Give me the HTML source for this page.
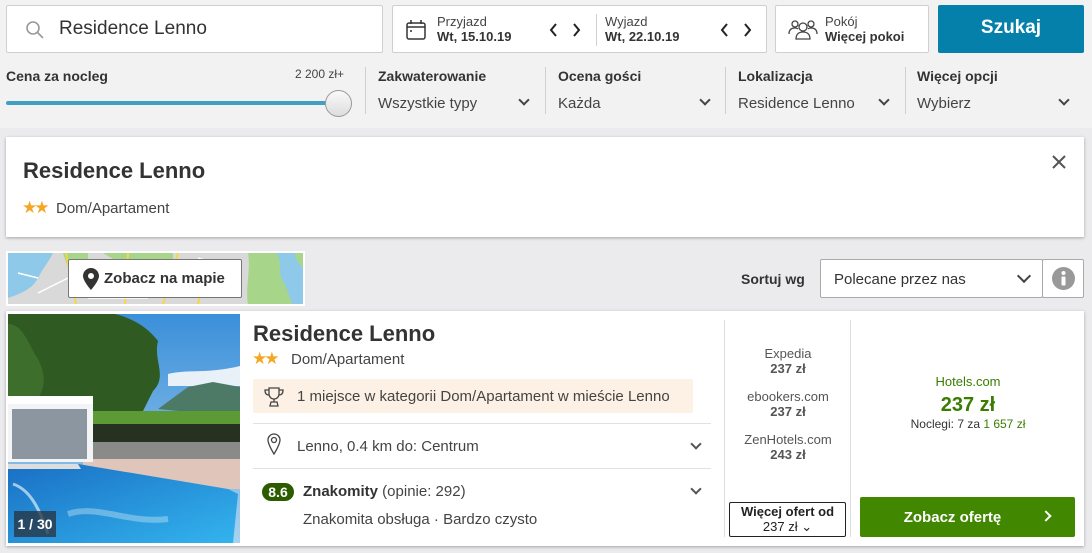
<!DOCTYPE html>
<html><head><meta charset="utf-8">
<style>
*{box-sizing:border-box;margin:0;padding:0}
body{width:1092px;height:553px;background:#ebebed;font-family:"Liberation Sans",Arial,sans-serif;color:#333;position:relative;overflow:hidden}
.a{position:absolute}
.box{position:absolute;background:#fff;border:1px solid #cfcfcf;border-radius:2px}
.lbl{font-size:14px;font-weight:bold;color:#333}
.val{font-size:15px;color:#444}
.div{position:absolute;width:1px;background:#d0d0d0}
.chev{position:absolute;width:8px;height:8px;border-right:2px solid #444;border-bottom:2px solid #444;transform:rotate(45deg)}
.card{position:absolute;background:#fff;box-shadow:0 1px 3px rgba(0,0,0,.3)}
.gray{color:#555}
</style></head><body>
<div class="a" style="left:0;top:0;width:1092px;height:128px;background:#f2f2f2"></div>
<!-- search -->
<div class="box" style="left:6px;top:5px;width:377px;height:48px">
<svg class="a" style="left:18px;top:14px" width="20" height="20" viewBox="0 0 20 20"><circle cx="8" cy="8" r="6" fill="none" stroke="#999" stroke-width="1.6"/><line x1="12.5" y1="12.5" x2="18" y2="18" stroke="#999" stroke-width="1.6"/></svg>
<div class="a" style="left:52px;top:12px;font-size:19px;color:#333">Residence Lenno</div></div>
<!-- dates -->
<div class="box" style="left:392px;top:5px;width:375px;height:48px">
<svg class="a" style="left:12px;top:13px" width="22" height="22" viewBox="0 0 22 22"><rect x="2" y="4" width="18" height="16" rx="2" fill="none" stroke="#333" stroke-width="1.5"/><line x1="2" y1="8" x2="20" y2="8" stroke="#333" stroke-width="1.5"/><line x1="6" y1="1" x2="6" y2="5" stroke="#333" stroke-width="1.5"/><line x1="16" y1="1" x2="16" y2="5" stroke="#333" stroke-width="1.5"/><circle cx="6" cy="12" r="1" fill="#333"/></svg>
<div class="a" style="left:44px;top:8px;font-size:13px;color:#444">Przyjazd</div>
<div class="a" style="left:44px;top:23px;font-size:13px;font-weight:bold">Wt, 15.10.19</div>
<svg class="a" style="left:156px;top:16px" width="32" height="16" viewBox="0 0 32 16" fill="none" stroke="#222" stroke-width="2"><path d="M7 2L2 8l5 6M25 2l5 6-5 6"/></svg>
<div class="div" style="left:203px;top:8px;height:32px"></div>
<div class="a" style="left:212px;top:8px;font-size:13px;color:#444">Wyjazd</div>
<div class="a" style="left:212px;top:23px;font-size:13px;font-weight:bold">Wt, 22.10.19</div>
<svg class="a" style="left:327px;top:16px" width="32" height="16" viewBox="0 0 32 16" fill="none" stroke="#222" stroke-width="2"><path d="M7 2L2 8l5 6M25 2l5 6-5 6"/></svg>
</div>
<!-- room -->
<div class="box" style="left:775px;top:5px;width:154px;height:48px">
<svg class="a" style="left:12px;top:12px" width="30" height="24" viewBox="0 0 30 24" fill="none" stroke="#444" stroke-width="1.3"><circle cx="15" cy="9" r="4"/><path d="M8 21c0-5 3-7 7-7s7 2 7 7z"/><circle cx="7" cy="6" r="3"/><path d="M1 16c0-4 2-6 6-6 1 0 2 .3 3 .8"/><circle cx="23" cy="6" r="3"/><path d="M29 16c0-4-2-6-6-6-1 0-2 .3-3 .8"/></svg>
<div class="a" style="left:49px;top:8px;font-size:13px;color:#444">Pokój</div>
<div class="a" style="left:49px;top:23px;font-size:13px;font-weight:bold">Więcej pokoi</div></div>
<div class="a" style="left:938px;top:5px;width:146px;height:48px;background:#0580ab;border-radius:2px;color:#fff;font-size:19px;font-weight:bold;text-align:center;line-height:46px">Szukaj</div>
<!-- filters -->
<div class="a lbl" style="left:6px;top:68px">Cena za nocleg</div>
<div class="a" style="left:295px;top:67px;font-size:12px;color:#444">2 200 zł+</div>
<div class="a" style="left:6px;top:101px;width:330px;height:4px;background:#3fa0c2;border-radius:2px"></div>
<div class="a" style="left:325px;top:90px;width:27px;height:27px;border-radius:50%;background:linear-gradient(#fafafa,#ddd);border:1px solid #999"></div>
<div class="div" style="left:365px;top:67px;height:47px"></div>
<div class="a lbl" style="left:378px;top:68px">Zakwaterowanie</div><div class="a val" style="left:378px;top:95px">Wszystkie typy</div><div class="chev" style="left:520px;top:96px"></div>
<div class="div" style="left:545px;top:67px;height:47px"></div>
<div class="a lbl" style="left:558px;top:68px">Ocena gości</div><div class="a val" style="left:558px;top:95px">Każda</div><div class="chev" style="left:701px;top:96px"></div>
<div class="div" style="left:725px;top:67px;height:47px"></div>
<div class="a lbl" style="left:738px;top:68px">Lokalizacja</div><div class="a val" style="left:738px;top:95px">Residence Lenno</div><div class="chev" style="left:880px;top:96px"></div>
<div class="div" style="left:905px;top:67px;height:47px"></div>
<div class="a lbl" style="left:917px;top:68px">Więcej opcji</div><div class="a val" style="left:917px;top:95px">Wybierz</div><div class="chev" style="left:1060px;top:96px"></div>
<!-- card 1 -->
<div class="card" style="left:6px;top:137px;width:1078px;height:100px">
<div class="a" style="left:17px;top:21px;font-size:22px;font-weight:bold;color:#333">Residence Lenno</div>
<div class="a" style="left:16px;top:61px;font-size:17px;color:#f5a623;letter-spacing:-3px">★★</div>
<div class="a" style="left:50px;top:63px;font-size:15px;color:#444">Dom/Apartament</div>
<svg class="a" style="left:1046px;top:18px" width="14" height="14" viewBox="0 0 14 14"><path d="M1 1L13 13M13 1L1 13" stroke="#555" stroke-width="2"/></svg>
</div>
<!-- map -->
<div class="a" style="left:6px;top:251px;width:299px;height:55px;background:#fff;padding:2px">
<svg width="295" height="51" viewBox="0 0 295 51"><rect width="295" height="51" fill="#d9d9d9"/><path d="M0 0h45c-5 10-10 15-15 25-5 10-15 15-30 20z" fill="#8ec9ea"/><path d="M55 0h25v15h-20z" fill="#a7d68b"/><path d="M95 0h70v6h-60z" fill="#a7d68b"/><path d="M240 0h55v51h-55c-3-15 3-35 0-51z" fill="#a7d68b"/><path d="M268 0c8 10 0 20 8 30 4 8 6 15 8 21h11V15c-5-5-8-10-8-15z" fill="#8ec9ea"/><path d="M58 0l10 51M170 0l-15 51M120 0l-3 51M200 10l-10 41" stroke="#f5d742" stroke-width="2" fill="none"/><path d="M30 40l30-15M80 45h60M190 5l30 10M10 20l20 5" stroke="#fff" stroke-width="1.5" fill="none"/></svg></div>
<div class="a" style="left:68px;top:259px;width:174px;height:39px;background:#fff;border:1px solid #777;border-radius:2px">
<svg class="a" style="left:14px;top:8px" width="16" height="22" viewBox="0 0 16 22"><path d="M8 0C3.6 0 0 3.6 0 8c0 5 8 14 8 14s8-9 8-14c0-4.4-3.6-8-8-8zm0 11a3 3 0 110-6 3 3 0 010 6z" fill="#333"/></svg>
<div class="a" style="left:35px;top:10px;font-size:15px;font-weight:bold;color:#333">Zobacz na mapie</div></div>
<!-- sort -->
<div class="a" style="left:741px;top:271px;font-size:14px;font-weight:bold;color:#333">Sortuj wg</div>
<div class="box" style="left:820px;top:259px;width:223px;height:39px;border-color:#aaa">
<div class="a" style="left:13px;top:11px;font-size:15px;color:#333">Polecane przez nas</div><div class="chev" style="left:198px;top:11px;width:10px;height:10px"></div></div>
<div class="box" style="left:1042px;top:259px;width:42px;height:39px;border-color:#aaa">
<svg class="a" style="left:9px;top:7px" width="23" height="23" viewBox="0 0 23 23"><circle cx="11.5" cy="11.5" r="11.5" fill="#999"/><circle cx="11.5" cy="6" r="2" fill="#fff"/><rect x="9.5" y="9.5" width="4" height="9" rx="1" fill="#fff"/></svg></div>
<!-- result card -->
<div class="card" style="left:6px;top:311px;width:1078px;height:235px">
<svg class="a" style="left:2px;top:3px" width="232" height="229" viewBox="0 0 232 229">
<defs><linearGradient id="sky" x1="0" y1="0" x2="0" y2="1"><stop offset="0" stop-color="#3b8fd9"/><stop offset="1" stop-color="#a8d2f0"/></linearGradient><linearGradient id="pool" x1="0" y1="0" x2="1" y2="1"><stop offset="0" stop-color="#1a6fc4"/><stop offset="1" stop-color="#33b4ee"/></linearGradient></defs>
<rect width="232" height="229" fill="url(#sky)"/>
<path d="M160 60c20-5 40 0 72-8v20h-72z" fill="#e8f1f8"/>
<path d="M150 95l30-22 25-5 27 5v30z" fill="#4d7a66"/>
<path d="M0 0h50c10 0 20 0 30-3 30 0 55 10 70 30-5 20 10 35-5 50l-10 20H0z" fill="#2f5a22"/>
<path d="M0 10c15 0 20 20 30 35 10 20 5 30 0 40H0z" fill="#3e6e2c"/>
<rect x="70" y="97" width="162" height="14" fill="#5c9a35"/>
<rect x="80" y="110" width="152" height="20" fill="#27311f"/>
<rect x="80" y="128" width="152" height="20" fill="#8a8b88"/>
<path d="M75 145h157v30H75z" fill="#e0c6ba"/>
<path d="M0 82h85v66H0z" fill="#f2f4f5"/><path d="M4 95h75v50H4z" fill="#8b96a0"/><path d="M0 82h85v8H0z" fill="#fff"/>
<path d="M0 150h70l150 25 10 5-5 49H0z" fill="url(#pool)"/>
<path d="M0 150h70l3 5H0z" fill="#ddd"/>
<path d="M5 170c15 5 25 20 35 50" stroke="#d8eef8" stroke-width="3" fill="none" opacity=".7"/>
<path d="M60 200c30-10 60 10 100 5" stroke="#cfeaf8" stroke-width="6" fill="none" opacity=".4"/>
</svg>
<div class="a" style="left:8px;top:200px;width:42px;height:26px;background:rgba(40,50,60,.75);color:#fff;font-size:14px;font-weight:bold;text-align:center;line-height:26px">1 / 30</div>
<div class="a" style="left:247px;top:10px;font-size:22px;font-weight:bold;color:#333">Residence Lenno</div>
<div class="a" style="left:246px;top:38px;font-size:17px;color:#f5a623;letter-spacing:-3px">★★</div>
<div class="a" style="left:285px;top:40px;font-size:15px;color:#444">Dom/Apartament</div>
<div class="a" style="left:247px;top:68px;width:440px;height:34px;background:#fcf1e4;border-radius:2px">
<svg class="a" style="left:11px;top:8px" width="20" height="20" viewBox="0 0 20 20" fill="none" stroke="#444" stroke-width="1.3"><path d="M5 1h10v6a5 5 0 01-10 0z"/><path d="M5 3H1c0 4 2 5 4 5M15 3h4c0 4-2 5-4 5"/><path d="M10 12v3M6 19h8l-1-4H7z"/></svg>
<div class="a" style="left:44px;top:9px;font-size:15px;color:#444">1 miejsce w kategorii Dom/Apartament w mieście Lenno</div></div>
<div class="a" style="left:247px;top:112px;width:458px;height:1px;background:#e2e2e2"></div>
<svg class="a" style="left:261px;top:122px" width="14" height="22" viewBox="0 0 14 22" fill="none" stroke="#444" stroke-width="1.3"><path d="M7 1C3.7 1 1 3.7 1 7c0 4.5 6 14 6 14s6-9.5 6-14c0-3.3-2.7-6-6-6z"/><circle cx="7" cy="7" r="2.5"/></svg>
<div class="a" style="left:291px;top:127px;font-size:15px;color:#444">Lenno, 0.4 km do: Centrum</div>
<div class="chev" style="left:686px;top:129px;border-color:#555"></div>
<div class="a" style="left:247px;top:157px;width:458px;height:1px;background:#e2e2e2"></div>
<div class="a" style="left:256px;top:172px;width:32px;height:18px;background:#2d5c00;border-radius:9px;color:#fff;font-size:14px;font-weight:bold;text-align:center;line-height:18px">8.6</div>
<div class="a" style="left:297px;top:172px;font-size:15px;color:#444"><b style="color:#333">Znakomity</b> (opinie: 292)</div>
<div class="chev" style="left:686px;top:174px;border-color:#555"></div>
<div class="a" style="left:297px;top:200px;font-size:15px;color:#444">Znakomita obsługa · Bardzo czysto</div>
<div class="div" style="left:718px;top:9px;height:217px;background:#ddd"></div>
<div class="div" style="left:844px;top:9px;height:217px;background:#ddd"></div>
<div class="a gray" style="left:720px;top:35px;width:124px;text-align:center;font-size:13px;line-height:15px">Expedia<br><b>237 zł</b></div>
<div class="a gray" style="left:720px;top:78px;width:124px;text-align:center;font-size:13px;line-height:15px">ebookers.com<br><b>237 zł</b></div>
<div class="a gray" style="left:720px;top:121px;width:124px;text-align:center;font-size:13px;line-height:15px">ZenHotels.com<br><b>243 zł</b></div>
<div class="a" style="left:723px;top:191px;width:117px;height:35px;border:1px solid #222;border-radius:2px;text-align:center;font-size:13px;line-height:15px;padding-top:1px;color:#222"><b>Więcej ofert od</b><br>237 zł ⌄</div>
<div class="a" style="left:846px;top:63px;width:232px;text-align:center;font-size:13px;color:#3a7d00">Hotels.com</div>
<div class="a" style="left:846px;top:83px;width:232px;text-align:center;font-size:20px;font-weight:bold;color:#3a7d00">237 zł</div>
<div class="a" style="left:846px;top:106px;width:232px;text-align:center;font-size:12px;color:#333">Noclegi: 7 za <span style="color:#3a7d00">1 657 zł</span></div>
<div class="a" style="left:854px;top:186px;width:215px;height:40px;background:#418700;border-radius:2px">
<div class="a" style="left:0;top:12px;width:185px;text-align:center;color:#fff;font-size:15px;font-weight:bold">Zobacz ofertę</div>
<div class="chev" style="left:182px;top:15px;border-color:#fff;transform:rotate(-45deg)"></div></div>
</div>
</body></html>
